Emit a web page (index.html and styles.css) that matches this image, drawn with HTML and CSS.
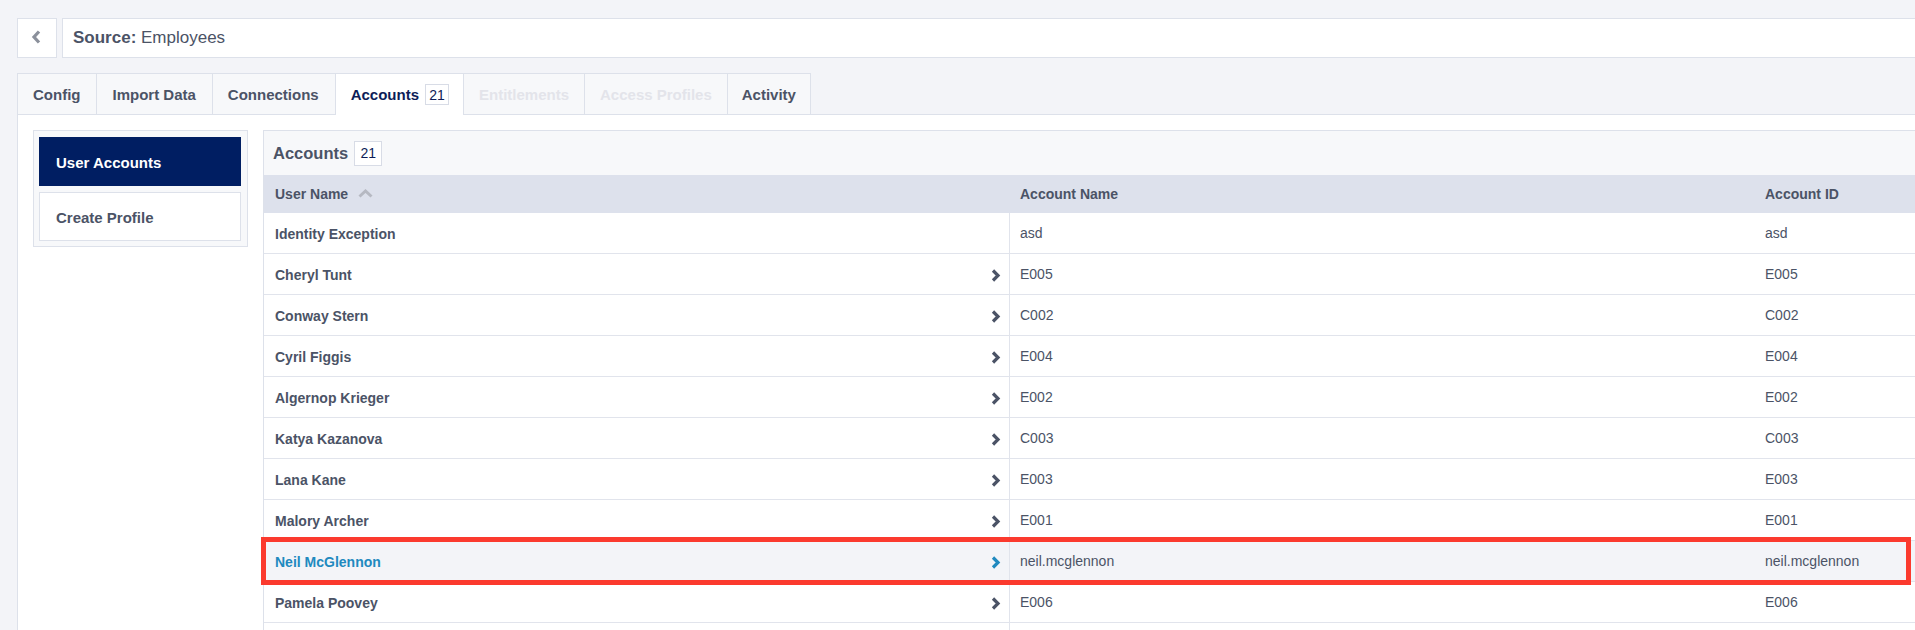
FILE: index.html
```html
<!DOCTYPE html>
<html>
<head>
<meta charset="utf-8">
<link rel="stylesheet" href="styles.css">
</head>
<body>
<div class="page">
  <div class="topbar">
    <button class="back" type="button">
      <svg width="10" height="14" viewBox="0 0 10 14"><polyline points="8,1.5 3,7 8,12.5" fill="none" stroke="#8b909b" stroke-width="3.2"/></svg>
    </button>
    <div class="source"><b>Source:</b> Employees</div>
  </div>
  <div class="tabs">
    <div class="tab">Config</div>
    <div class="tab">Import Data</div>
    <div class="tab">Connections</div>
    <div class="tab active">Accounts <span class="badge">21</span></div>
    <div class="tab disabled">Entitlements</div>
    <div class="tab disabled">Access Profiles</div>
    <div class="tab last">Activity</div>
  </div>
  <div class="panel">
    <aside class="side">
      <div class="side-item active">User Accounts</div>
      <div class="side-item">Create Profile</div>
    </aside>
    <section class="accounts">
      <div class="acc-head">Accounts <span class="badge big">21</span></div>
      <div class="row head">
        <div class="cell c1">User Name
          <svg class="sort" width="15" height="9" viewBox="0 0 15 9"><polyline points="1.5,7.5 7.5,2 13.5,7.5" fill="none" stroke="#b6b9c2" stroke-width="3"/></svg>
        </div>
        <div class="cell">Account Name</div>
        <div class="cell">Account ID</div>
      </div>
      <div class="row">
        <div class="cell c1 name">Identity Exception</div>
        <div class="cell">asd</div>
        <div class="cell">asd</div>
      </div>
      <div class="row">
        <div class="cell c1 name">Cheryl Tunt<svg class="chev" width="10" height="13" viewBox="0 0 10 13"><polyline points="2,1.5 7,6.5 2,11.5" fill="none" stroke="currentColor" stroke-width="3.2"/></svg></div>
        <div class="cell">E005</div>
        <div class="cell">E005</div>
      </div>
      <div class="row">
        <div class="cell c1 name">Conway Stern<svg class="chev" width="10" height="13" viewBox="0 0 10 13"><polyline points="2,1.5 7,6.5 2,11.5" fill="none" stroke="currentColor" stroke-width="3.2"/></svg></div>
        <div class="cell">C002</div>
        <div class="cell">C002</div>
      </div>
      <div class="row">
        <div class="cell c1 name">Cyril Figgis<svg class="chev" width="10" height="13" viewBox="0 0 10 13"><polyline points="2,1.5 7,6.5 2,11.5" fill="none" stroke="currentColor" stroke-width="3.2"/></svg></div>
        <div class="cell">E004</div>
        <div class="cell">E004</div>
      </div>
      <div class="row">
        <div class="cell c1 name">Algernop Krieger<svg class="chev" width="10" height="13" viewBox="0 0 10 13"><polyline points="2,1.5 7,6.5 2,11.5" fill="none" stroke="currentColor" stroke-width="3.2"/></svg></div>
        <div class="cell">E002</div>
        <div class="cell">E002</div>
      </div>
      <div class="row">
        <div class="cell c1 name">Katya Kazanova<svg class="chev" width="10" height="13" viewBox="0 0 10 13"><polyline points="2,1.5 7,6.5 2,11.5" fill="none" stroke="currentColor" stroke-width="3.2"/></svg></div>
        <div class="cell">C003</div>
        <div class="cell">C003</div>
      </div>
      <div class="row">
        <div class="cell c1 name">Lana Kane<svg class="chev" width="10" height="13" viewBox="0 0 10 13"><polyline points="2,1.5 7,6.5 2,11.5" fill="none" stroke="currentColor" stroke-width="3.2"/></svg></div>
        <div class="cell">E003</div>
        <div class="cell">E003</div>
      </div>
      <div class="row">
        <div class="cell c1 name">Malory Archer<svg class="chev" width="10" height="13" viewBox="0 0 10 13"><polyline points="2,1.5 7,6.5 2,11.5" fill="none" stroke="currentColor" stroke-width="3.2"/></svg></div>
        <div class="cell">E001</div>
        <div class="cell">E001</div>
      </div>
      <div class="row hover">
        <div class="cell c1 name">Neil McGlennon<svg class="chev" width="10" height="13" viewBox="0 0 10 13"><polyline points="2,1.5 7,6.5 2,11.5" fill="none" stroke="currentColor" stroke-width="3.2"/></svg></div>
        <div class="cell">neil.mcglennon</div>
        <div class="cell">neil.mcglennon</div>
      </div>
      <div class="row">
        <div class="cell c1 name">Pamela Poovey<svg class="chev" width="10" height="13" viewBox="0 0 10 13"><polyline points="2,1.5 7,6.5 2,11.5" fill="none" stroke="currentColor" stroke-width="3.2"/></svg></div>
        <div class="cell">E006</div>
        <div class="cell">E006</div>
      </div>
      <div class="row short">
        <div class="cell c1"></div>
        <div class="cell"></div>
        <div class="cell"></div>
      </div>
    </section>
  </div>
</div>
<div class="highlight"></div>
</body>
</html>
```

FILE: styles.css
```css
html, body {
  margin: 0;
  padding: 0;
}
body {
  background: #f3f4f8;
  font-family: "Liberation Sans", Arial, Helvetica, sans-serif;
  color: #4b5366;
  overflow: hidden;
  width: 1915px;
  height: 630px;
  position: relative;
}
.page {
  width: 2600px;
  padding: 18px 0 0 17px;
}
.topbar {
  display: flex;
  gap: 5px;
  height: 40px;
}
.back {
  width: 40px;
  height: 40px;
  box-sizing: border-box;
  border: 1px solid #dde1ea;
  background: #fff;
  padding: 0;
  display: flex;
  align-items: flex-start;
  justify-content: center;
  padding-top: 11px;
  padding-right: 3px;
}
.source {
  flex: 1;
  height: 40px;
  box-sizing: border-box;
  border: 1px solid #dde1ea;
  background: #fff;
  padding: 0 10px;
  display: flex;
  align-items: center;
  font-size: 17px;
  white-space: pre;
  color: #4b5366;
}
.source b {
  font-weight: bold;
}
.tabs {
  display: flex;
  margin-top: 15px;
  height: 41px;
}
.tab {
  display: flex;
  align-items: center;
  padding: 0 16px 0 15px;
  height: 41px;
  box-sizing: border-box;
  border: 1px solid #dde1ea;
  border-left-width: 0;
  border-bottom: 0;
  background: #f7f8fa;
  font-size: 15px;
  font-weight: bold;
  color: #4b5366;
}
.tab:first-child {
  border-left-width: 1px;
}
.tab.active {
  background: #fff;
  color: #0d1d58;
  height: 42px;
  margin-bottom: -1px;
  position: relative;
  padding-right: 14px;
}
.tab.disabled {
  color: #e3e4ea;
  padding-right: 15px;
}
.tab.last {
  padding: 0 14px 0 14px;
}
.badge {
  display: inline-flex;
  align-items: center;
  justify-content: center;
  min-width: 24px;
  height: 21px;
  box-sizing: border-box;
  margin-left: 6px;
  border: 1px solid #d8dce6;
  background: #fff;
  font-size: 14px;
  font-weight: normal;
  color: #0d1d58;
}
.badge.big {
  min-width: 28px;
  height: 25px;
}
.panel {
  display: flex;
  align-items: flex-start;
  gap: 15px;
  background: #fff;
  border-top: 1px solid #dde1ea;
  border-left: 1px solid #dde1ea;
  padding: 15px 0 0 15px;
  height: 500px;
}
.side {
  width: 215px;
  box-sizing: border-box;
  border: 1px solid #dde1ea;
  background: #f7f8fa;
  padding: 6px 6px 5px 5px;
  display: flex;
  flex-direction: column;
  gap: 6px;
}
.side-item {
  height: 49px;
  box-sizing: border-box;
  display: flex;
  align-items: center;
  padding-left: 16px;
  padding-top: 1px;
  font-size: 15px;
  font-weight: bold;
  color: #4b5366;
  background: #fff;
  border: 1px solid #dde1ea;
}
.side-item.active {
  background: #001e62;
  border-color: #001e62;
  color: #fff;
}
.accounts {
  width: 2240px;
  border-left: 1px solid #dde1ea;
  border-top: 1px solid #dde1ea;
}
.acc-head {
  height: 44px;
  display: flex;
  align-items: center;
  padding-left: 9px;
  background: #f7f8fa;
  font-size: 16.5px;
  font-weight: bold;
  color: #4b5366;
}
.row {
  display: grid;
  grid-template-columns: 746px 745px 745px;
  height: 41px;
  box-sizing: border-box;
  border-bottom: 1px solid #e1e4ec;
  font-size: 14px;
  background: #fff;
}
.row.short {
  height: 8px;
  border-bottom: 0;
}
.row.head {
  height: 38px;
  border-bottom: 0;
  background: #dde1ec;
  font-weight: bold;
}
.cell {
  display: flex;
  align-items: center;
  padding-left: 10px;
  color: #4b5366;
}
.c1 {
  padding-left: 11px;
  padding-right: 8px;
  border-right: 1px solid #e1e4ec;
}
.row.head .c1 {
  border-right: 0;
}
.name {
  font-weight: bold;
  justify-content: space-between;
  padding-top: 1px;
}
.sort {
  margin-left: 10px;
  margin-top: -1px;
}
.chev {
  color: #4b5366;
  margin-top: 1px;
}
.row.hover {
  background: #f3f4f8;
}
.row.hover .name,
.row.hover .chev {
  color: #2089bf;
}
.highlight {
  position: absolute;
  left: 261px;
  top: 537px;
  width: 1650px;
  height: 48px;
  box-sizing: border-box;
  border: 5px solid #fb3a2e;
  pointer-events: none;
}
```
